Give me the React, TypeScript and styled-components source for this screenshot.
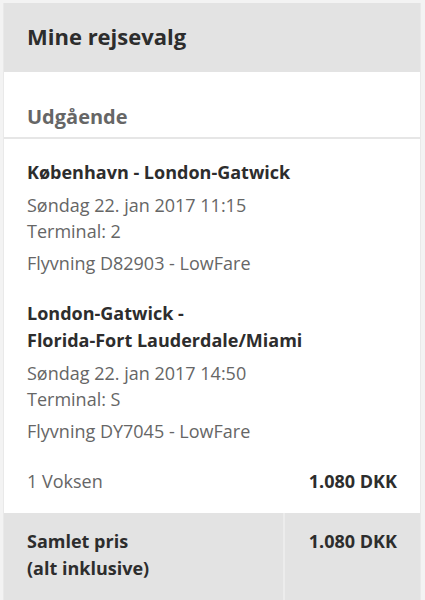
import React from "react";
import styled, { createGlobalStyle } from "styled-components";

const Global = createGlobalStyle`
  html, body { margin: 0; padding: 0; background: #f3f3f3; }
  body { font-family: "Open Sans", Lato, sans-serif; -webkit-font-smoothing: antialiased; }
`;

const Card = styled.div`
  margin: 3px 4px 0 3px;
  background: #fff;
  border-left: 1px solid #e9e9e9;
  border-right: 1px solid #e9e9e9;
  height: 597px;
  display: flex;
  flex-direction: column;
  box-sizing: border-box;
`;

const Header = styled.div`
  background: #e3e3e3;
  height: 69px;
  display: flex;
  align-items: center;
  padding: 0 0 0 23px;
`;

const Title = styled.h1`
  margin: 0;
  font-size: 22px;
  font-weight: 700;
  color: #2d2d2d;
  padding-bottom: 3px;
`;

const SectionHead = styled.div`
  padding: 31px 23px 6px;
  border-bottom: 2px solid #e6e6e6;
`;

const SectionTitle = styled.h2`
  margin: 0;
  font-size: 20px;
  font-weight: 700;
  color: #666;
  line-height: 28px;
`;

const Body = styled.div`
  padding: 20px 23px 0;
  display: flex;
  flex-direction: column;
  flex: 1;
`;

const Leg = styled.div`
  display: flex;
  flex-direction: column;
  margin-bottom: 24px;
`;

const Route = styled.div`
  font-size: 18px;
  font-weight: 700;
  color: #2d2d2d;
  line-height: 27px;
  margin-bottom: 6px;
`;

const Info = styled.div<{ $gap?: number }>`
  font-size: 18px;
  color: #666;
  line-height: 26px;
  margin-top: ${(p) => p.$gap ?? 0}px;
`;

const PriceRow = styled.div`
  display: flex;
  justify-content: space-between;
  align-items: center;
  height: 26px;
`;

const Label = styled.span`
  font-size: 18px;
  color: #666;
`;

const Amount = styled.span`
  font-size: 18px;
  font-weight: 700;
  color: #2d2d2d;
`;

const Footer = styled.div`
  background: #e3e3e3;
  display: grid;
  grid-template-columns: 279px 1fr;
  height: 87px;
`;

const FooterCell = styled.div<{ $right?: boolean }>`
  padding: 15px 23px 0 ${(p) => (p.$right ? "0" : "23px")};
  text-align: ${(p) => (p.$right ? "right" : "left")};
  border-left: ${(p) => (p.$right ? "2px solid #ececec" : "none")};
`;

const FooterLabel = styled.div`
  font-size: 18px;
  font-weight: 700;
  color: #2d2d2d;
  line-height: 27px;
`;

const legs = [
  {
    route: ["København - London-Gatwick"],
    date: "Søndag 22. jan 2017 11:15",
    terminal: "Terminal: 2",
    flight: "Flyvning D82903 - LowFare",
  },
  {
    route: ["London-Gatwick -", "Florida-Fort Lauderdale/Miami"],
    date: "Søndag 22. jan 2017 14:50",
    terminal: "Terminal: S",
    flight: "Flyvning DY7045 - LowFare",
  },
];

export default function App() {
  return (
    <>
      <Global />
      <Card>
        <Header>
          <Title>Mine rejsevalg</Title>
        </Header>
        <SectionHead>
          <SectionTitle>Udgående</SectionTitle>
        </SectionHead>
        <Body>
          {legs.map((l) => (
            <Leg key={l.flight}>
              <Route>
                {l.route.map((r) => (
                  <div key={r}>{r}</div>
                ))}
              </Route>
              <Info>{l.date}</Info>
              <Info>{l.terminal}</Info>
              <Info $gap={6}>{l.flight}</Info>
            </Leg>
          ))}
          <PriceRow>
            <Label>1 Voksen</Label>
            <Amount>1.080 DKK</Amount>
          </PriceRow>
        </Body>
        <Footer>
          <FooterCell>
            <FooterLabel>Samlet pris</FooterLabel>
            <FooterLabel>(alt inklusive)</FooterLabel>
          </FooterCell>
          <FooterCell $right>
            <FooterLabel>1.080 DKK</FooterLabel>
          </FooterCell>
        </Footer>
      </Card>
    </>
  );
}
